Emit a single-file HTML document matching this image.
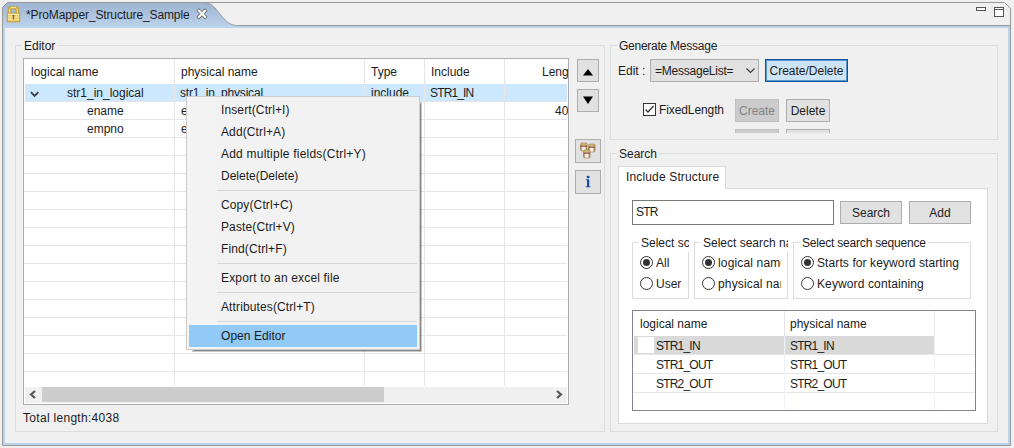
<!DOCTYPE html>
<html><head><meta charset="utf-8">
<style>
*{box-sizing:border-box}
html,body{margin:0;padding:0}
body{width:1014px;height:448px;overflow:hidden;background:#f0f0f0;position:relative;font-family:"Liberation Sans",sans-serif;font-size:12px;color:#1c1c1c}
.a{position:absolute}
.t{position:absolute;white-space:nowrap;line-height:14px;height:14px}
.grp{position:absolute;border:1px solid #dcdcdc}
.btn{position:absolute;background:#e1e1e1;border:1px solid #adadad;text-align:center;line-height:23px;white-space:nowrap}
.hl{position:absolute;height:1px;background:#e6e6e6}
.vl{position:absolute;width:1px;background:#e6e6e6}
.radio{position:absolute;width:13px;height:13px;border:1px solid #333;border-radius:50%;background:#fff}
.radio.on::after{content:"";position:absolute;left:2px;top:2px;width:7px;height:7px;border-radius:50%;background:#333}
</style></head><body>

<!-- window frame -->
<svg class="a" style="left:0;top:0" width="1014" height="448">
  <defs>
    <linearGradient id="tg" x1="0" y1="0" x2="0" y2="1">
      <stop offset="0" stop-color="#9db4d2"/>
      <stop offset="1" stop-color="#bdd4ed"/>
    </linearGradient>
  </defs>
  <!-- tab fill -->
  <path d="M2.5,28 L2.5,7.5 L7.5,2.5 L203,2.5 C208,2.5 211,3.5 215,8 L225,20 C229,24 233,25.5 238,25.5 L1010,25.5 L1010,28 Z" fill="url(#tg)"/>
  <!-- right area above line -->
  <path d="M203,2.5 L1004.5,2.5 L1010.5,8.5 L1010.5,25.5 L238,25.5 C233,25.5 229,24 225,20 L215,8 C211,3.5 208,2.5 203,2.5 Z" fill="#f0f0f0"/>
  <!-- outline -->
  <path d="M2.5,445.5 L2.5,7.5 L7.5,2.5 L1004.5,2.5 L1010.5,8.5 L1010.5,445.5 Z" fill="none" stroke="#999" stroke-width="1"/>
  <path d="M203,2.5 C208,2.5 211,3.5 215,8 L225,20 C229,24 233,25.5 238,25.5 L1010,25.5" fill="none" stroke="#999" stroke-width="1"/>
  <!-- blue band -->
  <rect x="3" y="26" width="1007" height="2" fill="#bcd3ec"/>
  <rect x="3" y="26" width="2" height="419" fill="#bcd3ec"/>
  <rect x="1008" y="26" width="2" height="419" fill="#bcd3ec"/>
  <rect x="3" y="443" width="1007" height="2" fill="#bcd3ec"/>
  <!-- lock icon -->
  <path d="M8.3,13 L8.3,9.2 Q8.3,6.3 11.2,6.3 L15.8,6.3 Q18.7,6.3 18.7,9.2 L18.7,13 L15.9,13 L15.9,9 L11.1,9 L11.1,13 Z" fill="#e2c05a" stroke="#b48d2c" stroke-width="0.7" fill-rule="evenodd"/>
  <rect x="11" y="6.8" width="5" height="1" fill="#f8ebb4"/>
  <rect x="9" y="9.3" width="1" height="3.5" fill="#f4e09a"/>
  <rect x="17" y="9.3" width="1" height="3.5" fill="#f4e09a"/>
  <rect x="6.8" y="12.8" width="13.4" height="9.4" rx="1" fill="#c49628"/>
  <rect x="7.8" y="13.5" width="11.4" height="7.8" fill="#eccc66"/>
  <rect x="7.8" y="13.8" width="11.4" height="1.2" fill="#fbf0bc"/>
  <rect x="7.8" y="16.4" width="11.4" height="1" fill="#f7e6a6"/>
  <rect x="7.8" y="18.9" width="11.4" height="1" fill="#f7e6a6"/>
  <ellipse cx="13.5" cy="15.8" rx="1" ry="1" fill="#7e6218"/>
  <rect x="12.9" y="15.8" width="1.2" height="3.8" fill="#7e6218"/>
  <!-- close X -->
  <path d="M199,10.8 L205,16.8 M205,10.8 L199,16.8" stroke="#707070" stroke-width="3.8" stroke-linecap="square"/>
  <path d="M199,10.8 L205,16.8 M205,10.8 L199,16.8" stroke="#fff" stroke-width="2.2" stroke-linecap="square"/>
  <!-- min / max -->
  <rect x="976.5" y="7.5" width="9" height="3" fill="#fff" stroke="#555" stroke-width="1"/>
  <rect x="994.5" y="7.5" width="9" height="9" fill="#fff" stroke="#555" stroke-width="1"/>
  <line x1="995" y1="9.5" x2="1003" y2="9.5" stroke="#555" stroke-width="1"/>
</svg>
<div class="t" style="left:26px;top:8px;letter-spacing:-0.12px">*ProMapper_Structure_Sample</div>

<!-- ============ Editor group ============ -->
<div class="grp" style="left:15px;top:45px;width:590px;height:387px"></div>
<div class="t" style="left:22px;top:39px;padding:0 2px;background:#f0f0f0">Editor</div>

<!-- table -->
<div class="a" style="left:23px;top:58px;width:546px;height:347px;border:1px solid #abadb3;background:#fff;overflow:hidden" id="tbl">
  <!-- header separators (relative coords: x-24, y-59) -->
  <div class="vl" style="left:150px;top:0;height:25px;background:#e5e5e5"></div>
  <div class="vl" style="left:340px;top:0;height:25px;background:#e5e5e5"></div>
  <div class="vl" style="left:400px;top:0;height:25px;background:#e5e5e5"></div>
  <div class="vl" style="left:480px;top:0;height:25px;background:#e5e5e5"></div>
  <div class="t" style="left:7px;top:6px">logical name</div>
  <div class="t" style="left:157px;top:6px">physical name</div>
  <div class="t" style="left:347px;top:6px">Type</div>
  <div class="t" style="left:407px;top:6px">Include</div>
  <div class="t" style="left:518px;top:6px">Length</div>
  <!-- grid -->
  <div class="a" style="left:1px;top:25px;width:542px;height:17px;background:#cce8ff"></div>
  <div class="vl" style="left:150px;top:25px;height:302px"></div>
  <div class="vl" style="left:340px;top:25px;height:302px"></div>
  <div class="vl" style="left:400px;top:25px;height:302px"></div>
  <div class="vl" style="left:480px;top:25px;height:302px"></div>
  <div class="hl" style="left:0;top:42px;width:543px"></div><div class="hl" style="left:0;top:60px;width:543px"></div><div class="hl" style="left:0;top:78px;width:543px"></div><div class="hl" style="left:0;top:96px;width:543px"></div><div class="hl" style="left:0;top:114px;width:543px"></div><div class="hl" style="left:0;top:132px;width:543px"></div><div class="hl" style="left:0;top:150px;width:543px"></div><div class="hl" style="left:0;top:168px;width:543px"></div><div class="hl" style="left:0;top:186px;width:543px"></div><div class="hl" style="left:0;top:204px;width:543px"></div><div class="hl" style="left:0;top:222px;width:543px"></div><div class="hl" style="left:0;top:240px;width:543px"></div><div class="hl" style="left:0;top:258px;width:543px"></div><div class="hl" style="left:0;top:276px;width:543px"></div><div class="hl" style="left:0;top:294px;width:543px"></div><div class="hl" style="left:0;top:312px;width:543px"></div>
  <!-- selected row -->
  <svg class="a" style="left:6px;top:32px" width="10" height="7"><path d="M0.9,1.2 L4.6,4.9 L8.3,1.2" fill="none" stroke="#3c3c3c" stroke-width="1.8"/></svg>
  <div class="t" style="left:43px;top:27px">str1_in_logical</div>
  <div class="t" style="left:156px;top:27px;letter-spacing:-0.2px">str1_in_physical</div>
  <div class="t" style="left:347px;top:27px">include</div>
  <div class="t" style="left:406px;top:27px;letter-spacing:-0.85px">STR1_IN</div>
  <div class="t" style="left:63px;top:45px">ename</div>
  <div class="t" style="left:157px;top:45px">ename</div>
  <div class="t" style="left:531px;top:45px">40</div>
  <div class="t" style="left:63px;top:63px">empno</div>
  <div class="t" style="left:157px;top:63px">empno</div>
  <!-- h scrollbar -->
  <div class="a" style="left:1px;top:328px;width:542px;height:16px;background:#f0f0f0"></div>
  <div class="a" style="left:18px;top:328px;width:342px;height:15px;background:#cdcdcd"></div>
  <svg class="a" style="left:5px;top:331px" width="8" height="9"><path d="M6,1 L2,4.5 L6,8" fill="none" stroke="#555" stroke-width="2.2"/></svg>
  <svg class="a" style="left:531px;top:331px" width="8" height="9"><path d="M2,1 L6,4.5 L2,8" fill="none" stroke="#555" stroke-width="2.2"/></svg>
</div>

<div class="t" style="left:23px;top:411px;letter-spacing:0.3px">Total length:4038</div>


<!-- side buttons -->
<div class="btn" style="left:577px;top:59px;width:22px;height:23px"></div>
<svg class="a" style="left:577px;top:59px" width="22" height="23"><path d="M6,16.5 L11,10 L16,16.5 Z" fill="#000"/></svg>
<div class="btn" style="left:577px;top:89px;width:22px;height:23px"></div>
<svg class="a" style="left:577px;top:89px" width="22" height="23"><path d="M6,7.5 L11,15 L16,7.5 Z" fill="#000"/></svg>
<div class="btn" style="left:575px;top:139px;width:26px;height:24px"></div>
<svg class="a" style="left:575px;top:139px" width="26" height="24">
  <defs>
    <linearGradient id="cs" x1="0" y1="0" x2="1" y2="0"><stop offset="0" stop-color="#9c7a3c"/><stop offset="0.3" stop-color="#e9e2d2"/><stop offset="0.55" stop-color="#ffffff"/><stop offset="1" stop-color="#a3824a"/></linearGradient>
    <linearGradient id="cg" x1="0" y1="0" x2="0" y2="1"><stop offset="0" stop-color="#b8944e"/><stop offset="1" stop-color="#e6cf8c"/></linearGradient>
    <g id="cyl"><rect x="0" y="0" width="6.6" height="8" rx="1.5" fill="url(#cs)" stroke="#8c6f3a" stroke-width="0.5"/><rect x="0.3" y="0.2" width="6" height="2.4" rx="1.2" fill="url(#cg)"/><rect x="0.4" y="2.6" width="5.8" height="1" fill="#7a2418"/></g>
  </defs>
  <use href="#cyl" x="5.5" y="4"/>
  <use href="#cyl" x="13.5" y="5"/>
  <use href="#cyl" x="8.5" y="11"/>
</svg>
<div class="btn" style="left:575px;top:170px;width:26px;height:24px"></div>
<svg class="a" style="left:575px;top:170px" width="26" height="24"><ellipse cx="13.1" cy="7" rx="1.5" ry="1.3" fill="#1250a2"/><path d="M10.8,9.2 L14.2,9.2 L14.2,16.2 L15.5,16.6 L15.5,17.3 L10.6,17.3 L10.6,16.6 L12,16.2 L12,10.2 L10.8,9.9 Z" fill="#1250a2"/></svg>

<!-- ============ Generate Message group ============ -->
<div class="grp" style="left:610px;top:45px;width:388px;height:95px"></div>
<div class="t" style="left:617px;top:39px;padding:0 2px;background:#f0f0f0" ><span style="letter-spacing:-0.25px">Generate Message</span></div>
<div class="t" style="left:618px;top:64px">Edit :</div>
<div class="a" style="left:650px;top:59px;width:109px;height:23px;background:#e1e1e1;border:1px solid #adadad"></div>
<div class="t" style="left:655px;top:64px;letter-spacing:-0.23px">=MessageList=</div>
<svg class="a" style="left:745px;top:67px" width="11" height="8"><path d="M1.5,1.5 L5.5,5.5 L9.5,1.5" fill="none" stroke="#3a3a3a" stroke-width="1.1"/></svg>
<div class="btn" style="left:765px;top:59px;width:83px;height:23px;background:#cde4f7;border:1px solid #0a559e;box-shadow:inset 0 0 0 1px #5c98d0;line-height:23px">Create/Delete</div>

<div class="a" style="left:643px;top:103px;width:13px;height:13px;border:1px solid #333;background:#fff"></div>
<svg class="a" style="left:643px;top:103px" width="13" height="13"><path d="M2.5,6.5 L5,9 L10.5,3" fill="none" stroke="#333" stroke-width="1.3"/></svg>
<div class="t" style="left:659px;top:103px;letter-spacing:-0.1px">FixedLength</div>
<div class="btn" style="left:735px;top:99px;width:44px;height:23px;background:#ccc;border-color:#bfbfbf;color:#838383">Create</div>
<div class="btn" style="left:786px;top:99px;width:44px;height:23px">Delete</div>
<div class="a" style="left:735px;top:129px;width:44px;height:4px;background:#ccc;border:1px solid #bfbfbf;border-bottom:none"></div>
<div class="a" style="left:786px;top:129px;width:44px;height:4px;background:#e1e1e1;border:1px solid #adadad;border-bottom:none"></div>

<!-- ============ Search group ============ -->
<div class="grp" style="left:610px;top:153px;width:388px;height:279px"></div>
<div class="t" style="left:617px;top:147px;padding:0 2px;background:#f0f0f0">Search</div>
<!-- tab panel -->
<div class="a" style="left:618px;top:188px;width:370px;height:236px;background:#fff;border:1px solid #d9d9d9"></div>
<div class="a" style="left:618px;top:166px;width:108px;height:23px;background:#fff;border:1px solid #d9d9d9;border-bottom:none"></div>
<div class="t" style="left:626px;top:170px;letter-spacing:0.15px">Include Structure</div>

<div class="a" style="left:632px;top:200px;width:202px;height:25px;background:#fff;border:1px solid #7a7a7a"></div>
<div class="t" style="left:636px;top:205px;letter-spacing:-0.8px">STR</div>
<div class="btn" style="left:840px;top:201px;width:62px;height:23px">Search</div>
<div class="btn" style="left:909px;top:201px;width:62px;height:23px">Add</div>

<div class="grp" style="left:632px;top:242px;width:57px;height:57px"></div>
<div class="a" style="left:638px;top:236px;width:51px;height:16px;overflow:hidden;background:#fff"><div class="t" style="left:3px;top:0">Select scope</div></div>
<div class="radio on" style="left:640px;top:256px"></div>
<div class="t" style="left:656px;top:256px">All</div>
<div class="radio" style="left:640px;top:277px"></div>
<div class="t" style="left:656px;top:277px">User</div>

<div class="grp" style="left:694px;top:242px;width:94px;height:57px"></div>
<div class="a" style="left:700px;top:236px;width:88px;height:16px;overflow:hidden;background:#fff"><div class="t" style="left:3px;top:0">Select search name</div></div>
<div class="a" style="left:700px;top:252px;width:81px;height:45px;overflow:hidden">
  <div class="radio on" style="left:2px;top:4px"></div>
  <div class="t" style="left:18px;top:4px;letter-spacing:0.15px">logical name</div>
  <div class="radio" style="left:2px;top:25px"></div>
  <div class="t" style="left:18px;top:25px;letter-spacing:0.15px">physical name</div>
</div>

<div class="grp" style="left:793px;top:242px;width:178px;height:57px"></div>
<div class="t" style="left:800px;top:236px;padding:0 2px;background:#fff;letter-spacing:-0.2px">Select search sequence</div>
<div class="radio on" style="left:801px;top:256px"></div>
<div class="t" style="left:817px;top:256px;letter-spacing:0.1px">Starts for keyword starting</div>
<div class="radio" style="left:801px;top:277px"></div>
<div class="t" style="left:817px;top:277px;letter-spacing:0.12px">Keyword containing</div>

<!-- search table -->
<div class="a" style="left:632px;top:310px;width:344px;height:101px;border:1px solid #828790;background:#fff;overflow:hidden">
  <div class="vl" style="left:151px;top:0;height:25px;background:#e5e5e5"></div>
  <div class="vl" style="left:301px;top:0;height:25px;background:#e5e5e5"></div>
  <div class="t" style="left:7px;top:6px">logical name</div>
  <div class="t" style="left:157px;top:6px">physical name</div>
  <div class="a" style="left:1px;top:25px;width:300px;height:18px;background:#d9d9d9"></div>
  <div class="hl" style="left:0;top:43px;width:342px"></div>
  <div class="hl" style="left:0;top:62px;width:342px"></div>
  <div class="hl" style="left:0;top:81px;width:342px"></div>
  <div class="vl" style="left:151px;top:25px;height:74px;background:#eef3f9"></div>
  <div class="vl" style="left:301px;top:25px;height:74px;background:#eef3f9"></div>
  <div class="a" style="left:5px;top:26px;width:16px;height:16px;background:#fff"></div>
  <div class="t" style="left:23px;top:28px;letter-spacing:-0.8px">STR1_IN</div>
  <div class="t" style="left:157px;top:28px;letter-spacing:-0.8px">STR1_IN</div>
  <div class="t" style="left:23px;top:47px;letter-spacing:-0.8px">STR1_OUT</div>
  <div class="t" style="left:157px;top:47px;letter-spacing:-0.8px">STR1_OUT</div>
  <div class="t" style="left:23px;top:66px;letter-spacing:-0.8px">STR2_OUT</div>
  <div class="t" style="left:157px;top:66px;letter-spacing:-0.8px">STR2_OUT</div>
</div>

<!-- ============ context menu ============ -->
<div class="a" style="left:192px;top:102px;width:230px;height:250px;background:rgba(0,0,0,0.22);filter:blur(0.6px)"></div>
<div class="a" style="left:194px;top:104px;width:227px;height:247px;background:rgba(0,0,0,0.32)"></div>
<div class="a" style="left:186px;top:96px;width:234px;height:254px;background:#f2f2f2;border:1px solid #ccc">
  <div class="a" style="left:0;top:0;width:29px;height:252px;background:#f4f4f4"></div>
  <div class="a" style="left:2px;top:228px;width:228px;height:22px;background:#91c9f7"></div>
<div class="a" style="left:30px;top:93px;width:200px;height:1px;background:#d7d7d7"></div>
<div class="a" style="left:30px;top:166px;width:200px;height:1px;background:#d7d7d7"></div>
<div class="a" style="left:30px;top:195px;width:200px;height:1px;background:#d7d7d7"></div>
<div class="a" style="left:30px;top:224px;width:200px;height:1px;background:#d7d7d7"></div>
<div class="t" style="left:34px;top:6px;letter-spacing:0.12px">Insert(Ctrl+I)</div>
<div class="t" style="left:34px;top:28px;letter-spacing:0.12px">Add(Ctrl+A)</div>
<div class="t" style="left:34px;top:50px;letter-spacing:0.22px">Add multiple fields(Ctrl+Y)</div>
<div class="t" style="left:34px;top:72px;letter-spacing:0.0px">Delete(Delete)</div>
<div class="t" style="left:34px;top:101px;letter-spacing:0.12px">Copy(Ctrl+C)</div>
<div class="t" style="left:34px;top:123px;letter-spacing:0.12px">Paste(Ctrl+V)</div>
<div class="t" style="left:34px;top:145px;letter-spacing:0.12px">Find(Ctrl+F)</div>
<div class="t" style="left:34px;top:174px;letter-spacing:0.17px">Export to an excel file</div>
<div class="t" style="left:34px;top:203px;letter-spacing:0.12px">Attributes(Ctrl+T)</div>
<div class="t" style="left:34px;top:232px;letter-spacing:0.05px">Open Editor</div>

</div>
</body></html>
